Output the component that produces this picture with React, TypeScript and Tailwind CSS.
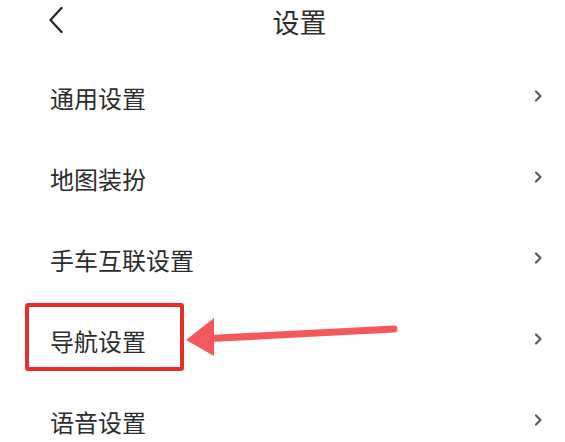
import React from "react";

const items = ["通用设置", "地图装扮", "手车互联设置", "导航设置", "语音设置"];

function Chevron() {
  return (
    <svg width="10" height="14" viewBox="0 0 10 14" className="mt-[-4px]">
      <path d="M3 2.5 L7.5 7 L3 11.5" fill="none" stroke="#5a5a5a" strokeWidth="2.2" strokeLinecap="round" strokeLinejoin="round" />
    </svg>
  );
}

export default function App() {
  return (
    <div
      className="w-[565px] h-[442px] bg-white overflow-hidden text-[#2c2c2c]"
      style={{ fontFamily: '"Noto Sans CJK SC", "Noto Sans", sans-serif' }}
    >
      <div className="relative h-[42px] flex items-center justify-center pl-[34px]">
        <svg width="16" height="28" viewBox="0 0 16 28" className="absolute left-[48px] top-[6px]">
          <path d="M13.5 2 L2.5 14 L13.5 26" fill="none" stroke="#2a2a2a" strokeWidth="2.4" strokeLinecap="round" strokeLinejoin="round" />
        </svg>
        <span className="text-[27px] leading-none">设置</span>
      </div>
      <div className="mt-[15px]">
        {items.map((t, i) => (
          <div key={t} className="relative h-[81px] flex items-center justify-between pl-[50px] pr-[22px]">
            <span className="text-[24px] leading-none">{t}</span>
            <Chevron />
            {i === 3 && (
              <>
                <div className="absolute left-[25px] top-[3px] w-[159px] h-[68px] border-4 border-[#e5302a] rounded-[3px]" />
                <svg width="420" height="81" viewBox="0 0 420 81" className="absolute left-0 top-0">
                  <line x1="210" y1="38.5" x2="394" y2="29" stroke="#f2585c" strokeWidth="7" strokeLinecap="round" />
                  <polygon points="186,40 214,18 214,56" fill="#f2585c" />
                </svg>
              </>
            )}
          </div>
        ))}
      </div>
    </div>
  );
}
